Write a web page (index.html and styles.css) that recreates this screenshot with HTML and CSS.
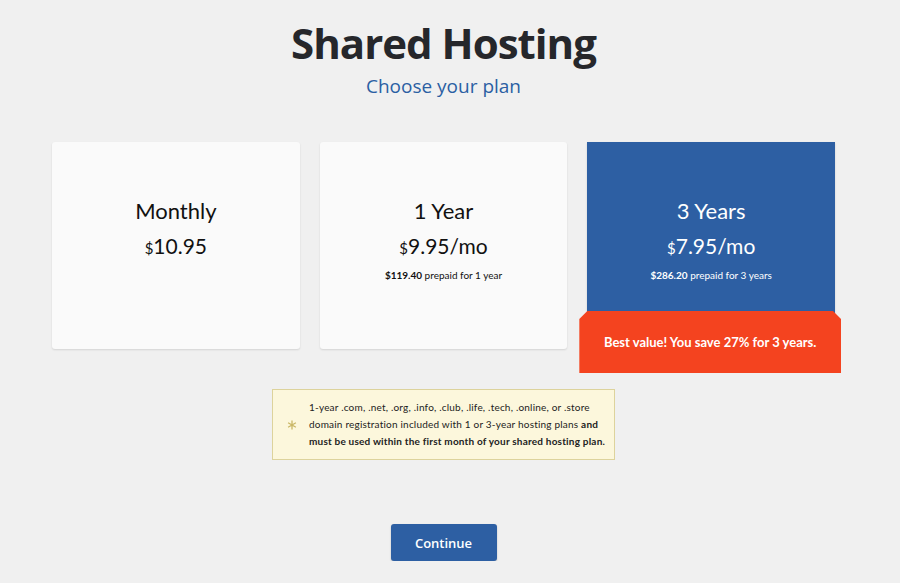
FILE: index.html
```html
<!DOCTYPE html>
<html lang="en">

<head>
    <meta charset="UTF-8">
    <meta name="viewport" content="width=device-width, initial-scale=1.0">
    <title>Shared Hosting</title>
    <link rel="stylesheet" href="styles.css">
</head>

<body>
    <div class="page">
        <header class="heading">
            <h1>Shared Hosting</h1>
            <p class="subtitle">Choose your plan</p>
        </header>

        <div class="plans">
            <div class="plan">
                <div class="plan-name">Monthly</div>
                <div class="plan-price"><span class="cur">$</span>10.95</div>
            </div>
            <div class="plan">
                <div class="plan-name">1 Year</div>
                <div class="plan-price"><span class="cur">$</span>9.95/mo</div>
                <div class="plan-note"><b>$119.40</b> prepaid for 1 year</div>
            </div>
            <div class="plan selected">
                <div class="plan-name">3 Years</div>
                <div class="plan-price"><span class="cur">$</span>7.95/mo</div>
                <div class="plan-note"><b>$286.20</b> prepaid for 3 years</div>
                <div class="ribbon">Best value! You save 27% for 3 years.</div>
            </div>
        </div>

        <div class="notice">
            <svg class="star" width="10" height="10" viewBox="0 0 10 10">
                <path d="M5 0.5V9.5M1.1 2.75L8.9 7.25M1.1 7.25L8.9 2.75" stroke="#c9b766" stroke-width="1.3" fill="none" />
            </svg>
            <div class="notice-text">
                <span>1-year .com, .net, .org, .info, .club, .life, .tech, .online, or .store</span>
                <span>domain registration included with 1 or 3-year hosting plans <b>and</b></span>
                <b>must be used within the first month of your shared hosting plan.</b>
            </div>
        </div>

        <div class="actions">
            <button type="button" class="btn">Continue</button>
        </div>
    </div>
</body>

</html>
```

FILE: styles.css
```css
body {
    margin: 0;
    padding-right: 13px;
    background: #f0f0f0;
    font-family: Lato, "Open Sans", sans-serif;
    color: #1a1a1a;
}

.page {
    width: 783px;
    margin: 0 auto;
}

.heading {
    text-align: center;
    padding-top: 18px;
}

h1 {
    margin: 0;
    font-family: "Open Sans", sans-serif;
    font-size: 42px;
    font-weight: 700;
    line-height: 50px;
    letter-spacing: -1px;
    color: #26272b;
}

.subtitle {
    margin: 5px 0 0;
    font-family: "Open Sans", sans-serif;
    font-size: 19px;
    line-height: 26px;
    color: #2b5fa3;
}

.plans {
    display: grid;
    grid-template-columns: repeat(3, 1fr);
    gap: 20px;
    margin-top: 43px;
}

.plan {
    position: relative;
    height: 207px;
    box-sizing: border-box;
    padding-top: 56px;
    background: #fafafa;
    border-radius: 3px;
    box-shadow: 0 1px 2px rgba(0, 0, 0, 0.12);
    text-align: center;
    color: #111;
}

.plan.selected {
    background: #2d5fa3;
    color: #fff;
    border-radius: 0;
}

.plan-name {
    font-size: 22px;
    line-height: 26px;
}

.plan-price {
    margin-top: 9px;
    font-size: 21px;
    line-height: 26px;
}

.cur {
    font-size: 15px;
}

.plan-note {
    margin-top: 7px;
    font-size: 10px;
    line-height: 14px;
}

.ribbon {
    position: absolute;
    left: -8px;
    right: -6px;
    top: 169px;
    height: 62px;
    display: flex;
    align-items: center;
    justify-content: center;
    background: #f4431f;
    clip-path: polygon(0 8px, 8px 0, calc(100% - 8px) 0, 100% 8px, 100% 100%, 0 100%);
    font-size: 13px;
    font-weight: 700;
    color: #fff;
}

.notice {
    display: flex;
    align-items: center;
    gap: 12px;
    width: 343px;
    box-sizing: border-box;
    margin: 40px auto 0 220px;
    padding: 9px 8px 9px 14px;
    background: #fcf7dc;
    border: 1px solid #ddd39c;
    font-size: 10px;
    line-height: 17px;
    letter-spacing: 0.2px;
    color: #222;
}

.notice-text {
    display: flex;
    flex-direction: column;
    white-space: nowrap;
}

.star {
    flex: none;
}

.actions {
    display: flex;
    justify-content: center;
    margin-top: 64px;
}

.btn {
    width: 106px;
    height: 37px;
    border: 0;
    border-radius: 3px;
    background: #2d5fa3;
    color: #fff;
    font-family: "Open Sans", sans-serif;
    font-size: 13px;
    font-weight: 600;
    box-shadow: 0 1px 2px rgba(0, 0, 0, 0.2);
}
```
